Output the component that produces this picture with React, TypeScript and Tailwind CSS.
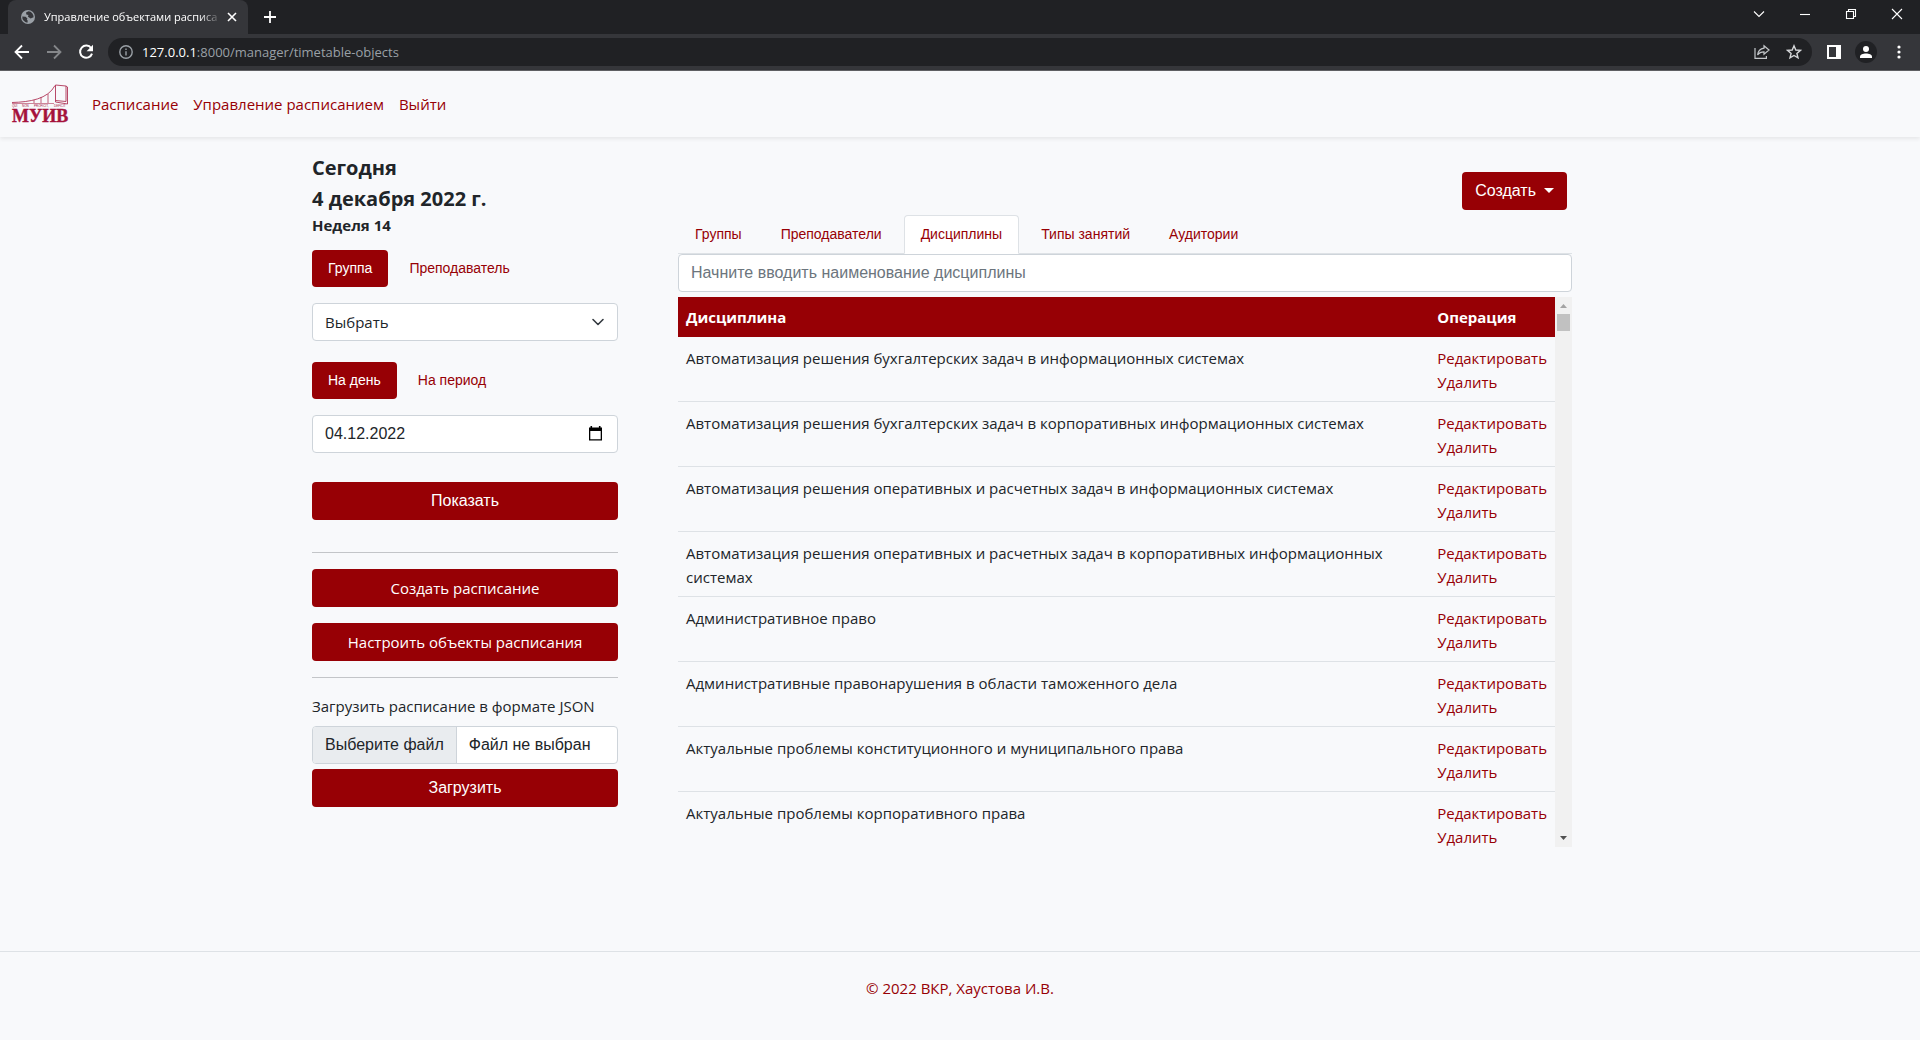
import React from "react";

const disciplines = [
  "Автоматизация решения бухгалтерских задач в информационных системах",
  "Автоматизация решения бухгалтерских задач в корпоративных информационных системах",
  "Автоматизация решения оперативных и расчетных задач в информационных системах",
  "Автоматизация решения оперативных и расчетных задач в корпоративных информационных системах",
  "Административное право",
  "Административные правонарушения в области таможенного дела",
  "Актуальные проблемы конституционного и муниципального права",
  "Актуальные проблемы корпоративного права",
];

const tabs = ["Группы", "Преподаватели", "Дисциплины", "Типы занятий", "Аудитории"];

const arial = "font-['Liberation_Sans',Arial,sans-serif]";
const solidButton =
  "flex h-[38px] w-full items-center justify-center rounded bg-[#970005] text-white";

function TabStrip() {
  return (
    <div className="flex h-[34px] items-stretch bg-[#202124] text-white">
      <div className="ml-2 flex w-60 items-center rounded-t-lg bg-[#35363a] pr-[11px] pl-3">
        <svg className="ml-px size-[14px] shrink-0" viewBox="0 0 14 14" aria-hidden="true">
          <circle cx="7" cy="7" r="7" fill="#9aa0a6" />
          <path d="M7.500 1.200 5 2.600 5.400 4.400 7.400 5 7 6.800 9.600 8.400 12.600 7.200A5.700 5.700 0 0 0 7.500 1.200ZM1.300 6.400 4.600 6.800 6.400 8.600 5.800 10 6.800 10.600 6.400 12.700A5.700 5.700 0 0 1 1.300 6.400Z" fill="#35363a" />
        </svg>
        <span className="ml-[9px] w-[178px] text-[11px] whitespace-nowrap [mask-image:linear-gradient(to_right,black_155px,transparent_178px)]">
          Управление объектами расписа
        </span>
        <button aria-label="Закрыть вкладку" className="ml-auto">
          <svg className="size-[10px]" viewBox="0 0 10 10" stroke="#fff" strokeWidth="1.6" aria-hidden="true">
            <path d="M1 1l8 8M9 1l-8 8" />
          </svg>
        </button>
      </div>
      <button aria-label="Новая вкладка" className="ml-4">
        <svg className="size-3" viewBox="0 0 12 12" stroke="#fff" strokeWidth="1.8" aria-hidden="true">
          <path d="M6 0v12M0 6h12" />
        </svg>
      </button>
      <div className="ml-auto flex h-7 items-center">
        {[
          ["Поиск вкладок", "M1 3.5l5 5 5-5"],
          ["Свернуть", "M1 6.5h10"],
          ["Развернуть", "M1.5 3.5h7v7h-7zM3.5 3.5v-2h7v7h-2"],
          ["Закрыть", "M1 1l10 10M11 1L1 11"],
        ].map(([label, d]) => (
          <button key={label} aria-label={label} className="flex w-[46px] justify-center">
            <svg className="size-3" viewBox="0 0 12 12" fill="none" stroke="#fff" strokeWidth="1.1" aria-hidden="true">
              <path d={d} />
            </svg>
          </button>
        ))}
      </div>
    </div>
  );
}

function Toolbar() {
  return (
    <div className="flex h-9 items-center bg-[#35363a] pr-[13px] pl-[14px]">
      <button aria-label="Назад">
        <svg className="size-4" viewBox="0 0 16 16" fill="none" stroke="#fff" strokeWidth="1.8" aria-hidden="true">
          <path d="M15 8H2M8 1.5 1.5 8 8 14.5" />
        </svg>
      </button>
      <button aria-label="Вперёд" className="ml-4">
        <svg className="size-4" viewBox="0 0 16 16" fill="none" stroke="#85878a" strokeWidth="1.8" aria-hidden="true">
          <path d="M1 8h13M8 1.5 14.5 8 8 14.5" />
        </svg>
      </button>
      <button aria-label="Обновить" className="ml-4">
        <svg className="size-4" viewBox="0 0 16 16" fill="none" aria-hidden="true">
          <path d="M13.2 4.2A6.1 6.1 0 1 0 14 9.6" stroke="#fff" strokeWidth="2" />
          <path d="M15 .8v6.4H8.6z" fill="#fff" />
        </svg>
      </button>
      <div className="ml-[14px] flex h-7 flex-1 items-center rounded-full bg-[#202124] pr-[10px] pl-[11px]">
        <svg className="size-[14px]" viewBox="0 0 14 14" fill="none" stroke="#9aa0a6" strokeWidth="1.4" aria-hidden="true">
          <circle cx="7" cy="7" r="6.2" />
          <path d="M7 6.2v4.2M7 3.4v1.5" />
        </svg>
        <span className="ml-[9px] text-[13px] leading-5 text-[#9aa0a6]">
          <span className="text-white">127.0.0.1</span>:8000/manager/timetable-objects
        </span>
        <button aria-label="Поделиться" className="ml-auto">
          <svg className="size-4" viewBox="0 0 16 16" fill="none" stroke="#c4c7ca" strokeWidth="1.2" aria-hidden="true">
            <path d="M1 4v10.4h11.4V12" />
            <path d="M10 1.8 15 6l-5 4.2V7.8C7 7.8 5 8.8 3.6 11 4 7.4 6 4.8 10 4.2z" />
          </svg>
        </button>
        <button aria-label="Добавить в закладки" className="ml-4">
          <svg className="size-4" viewBox="0 0 16 16" fill="none" stroke="#d5d7d9" strokeWidth="1.4" aria-hidden="true">
            <path d="M8 1.8 9.8 6l4.6.4-3.5 3 1.1 4.5L8 11.5l-4 2.4 1.1-4.5-3.5-3L6.2 6z" />
          </svg>
        </button>
      </div>
      <button aria-label="Боковая панель" className="ml-[15px]">
        <svg className="size-[14px]" viewBox="0 0 14 14" aria-hidden="true">
          <path d="M0 0h14v14H0zM2 2v10h7V2z" fill="#fff" fillRule="evenodd" />
        </svg>
      </button>
      <button aria-label="Профиль" className="ml-[14px] flex size-[22px] items-center justify-center rounded-full bg-[#202124]">
        <svg className="size-3" viewBox="0 0 12 12" fill="#fff" aria-hidden="true">
          <circle cx="6" cy="3" r="3" />
          <path d="M0 12V10.5C0 8.5 3 7.4 6 7.4s6 1.1 6 3.1V12z" />
        </svg>
      </button>
      <button aria-label="Меню" className="ml-[14px] flex w-4 justify-center">
        <svg className="h-[14px] w-1" viewBox="0 0 4 14" fill="#fff" aria-hidden="true">
          <circle cx="2" cy="2" r="1.6" />
          <circle cx="2" cy="7" r="1.6" />
          <circle cx="2" cy="12" r="1.6" />
        </svg>
      </button>
    </div>
  );
}

function Logo() {
  return (
    <svg className="h-10 w-[58px] overflow-visible" viewBox="0 0 58 40" role="img" aria-label="МУИВ">
      <g fill="none" stroke="#b03558" strokeWidth=".9">
        <path d="M0 18.500C18 18 36 15 43 1.500" />
        <path d="M0 19.500h42" strokeWidth=".6" />
        <path d="M22 19v-3M29 19v-6M36 19v-9" strokeWidth=".8" />
        <path d="M43.500 18V1L54 2V17.500L43.500 16.500M54 2 55.500 3V20L43.500 18" />
      </g>
      <g fontSize="3" fill="#a5123c" fontFamily="Liberation Sans, sans-serif">
        <text x="0" y="23">QUI</text>
        <text x="10" y="23">NON</text>
        <text x="22" y="23">PROFICIT,</text>
        <text x="42" y="23">DEFICIT</text>
      </g>
      <text x="0" y="38" fontSize="18" fontWeight="700" fill="#a5123c" stroke="#a5123c" strokeWidth=".4" fontFamily="Liberation Serif, serif">
        МУИВ
      </text>
    </svg>
  );
}

function Pills({ active, other }: { active: string; other: string }) {
  return (
    <div className={`${arial} flex gap-[5px] text-sm leading-[21px]`}>
      <button className="rounded bg-[#970005] px-4 py-2 text-white">{active}</button>
      <button className="px-4 py-2 text-[#970005]">{other}</button>
    </div>
  );
}

function Sidebar() {
  return (
    <aside className="w-[306px] shrink-0">
      <h1 className="mt-[15px] text-xl leading-[31px] font-bold">
        Сегодня
        <br />4 декабря 2022 г.
      </h1>
      <h2 className="mb-[14px] text-[15px] leading-[22px] font-bold">Неделя 14</h2>
      <Pills active="Группа" other="Преподаватель" />
      <div className="relative mt-4">
        <select aria-label="Группа" className="h-[38px] w-full appearance-none rounded border border-[#ced4da] bg-white px-3 pt-px text-[15px]">
          <option>Выбрать</option>
        </select>
        <svg className="pointer-events-none absolute top-[11px] right-3 size-4" viewBox="0 0 16 16" fill="none" stroke="#343a40" strokeWidth="1.600" strokeLinecap="round" strokeLinejoin="round" aria-hidden="true">
          <path d="m3 5.500 5 5 5-5" />
        </svg>
      </div>
      <div className="mt-[21px]">
        <Pills active="На день" other="На период" />
      </div>
      <div className="relative mt-4">
        <input aria-label="Дата" defaultValue="04.12.2022" className={`${arial} block h-[38px] w-full rounded border border-[#ced4da] bg-white px-3 text-base`} />
        <button aria-label="Открыть календарь" className="absolute top-[11px] right-4">
          <svg className="h-[15px] w-[13px]" viewBox="0 0 13 15" aria-hidden="true">
            <path d="M1.5 0h1.6v1.5h6.8V0h1.6v1.5H13V14.500H0V1.500h1.500zM1.300 5v8.200h10.400V5z" fill="#000" fillRule="evenodd" />
          </svg>
        </button>
      </div>
      <button className={`${arial} ${solidButton} mt-[29px]`}>Показать</button>
      <hr className="mt-8 mb-4 border-[#c3c5c8]" />
      <a href="#create" className={`${solidButton} text-[15px]`}>Создать расписание</a>
      <a href="#objects" className={`${solidButton} mt-4 text-[15px]`}>Настроить объекты расписания</a>
      <hr className="my-4 border-[#c3c5c8]" />
      <label htmlFor="json" className="block text-[15px] leading-6">
        Загрузить расписание в формате JSON
      </label>
      <label className={`${arial} relative mt-2 flex h-[38px] items-center overflow-hidden rounded border border-[#ced4da] bg-white text-base`}>
        <input id="json" type="file" className="sr-only" />
        <span className="flex h-full items-center border-r border-[#ced4da] bg-[#e9ecef] px-3">Выберите файл</span>
        <span className="px-3">Файл не выбран</span>
      </label>
      <button className={`${arial} ${solidButton} mt-[5px]`}>Загрузить</button>
    </aside>
  );
}

function Disciplines() {
  return (
    <section className="min-w-0 flex-1 pt-[35px]">
      <div className="flex justify-end pr-[5px]">
        <button className={`${arial} flex h-[38px] items-center gap-2 rounded bg-[#970005] px-[13px] text-base text-white`}>
          Создать
          <svg className="mb-[2px] h-[5px] w-[10px]" viewBox="0 0 10 5" fill="#fff" aria-hidden="true">
            <path d="M0 0h10L5 5z" />
          </svg>
        </button>
      </div>
      <div role="tablist" className={`${arial} mt-[5px] flex gap-[5px] border-b border-[#dee2e6] text-sm leading-[21px]`}>
        {tabs.map((tab) => (
          <button
            key={tab}
            role="tab"
            aria-selected={tab === "Дисциплины"}
            className="-mb-px rounded-t border border-transparent px-4 py-2 text-[#970005] aria-selected:border-[#dee2e6] aria-selected:border-b-white aria-selected:bg-white"
          >
            {tab}
          </button>
        ))}
      </div>
      <input
        aria-label="Наименование дисциплины"
        placeholder="Начните вводить наименование дисциплины"
        className={`${arial} block h-[38px] w-full rounded border border-[#ced4da] bg-white px-3 text-base placeholder:text-[#6c757d]`}
      />
      <div className="mt-[5px] flex h-[550px]">
        <div className="flex-1 overflow-y-auto [scrollbar-width:none]">
          <table className="w-full text-left text-[15px] leading-6">
            <thead className="bg-[#970005] text-white">
              <tr>
                <th className="p-2">Дисциплина</th>
                <th className="w-[124px] p-2">Операция</th>
              </tr>
            </thead>
            <tbody>
              {disciplines.map((name) => (
                <tr key={name} className="border-b border-[#dee2e6] align-top">
                  <td className="px-2 pt-[9px] pb-[7px]">{name}</td>
                  <td className="px-2 pt-[9px] pb-[7px] text-[#970005]">
                    <a href="#edit" className="block">Редактировать</a>
                    <a href="#delete" className="block">Удалить</a>
                  </td>
                </tr>
              ))}
            </tbody>
          </table>
        </div>
        <div className="flex w-[17px] shrink-0 flex-col items-center bg-[#f1f1f1]" aria-hidden="true">
          <svg className="mt-[7px] mb-[6px] h-1 w-[7px] shrink-0" viewBox="0 0 7 4" fill="#a3a3a3">
            <path d="M0 4h7L3.500 0z" />
          </svg>
          <div className="h-[17px] w-[13px] bg-[#c1c1c1]" />
          <svg className="mt-auto mb-[7px] h-1 w-[7px] shrink-0" viewBox="0 0 7 4" fill="#505050">
            <path d="M0 0h7L3.500 4z" />
          </svg>
        </div>
      </div>
    </section>
  );
}

export default function App() {
  return (
    <div className="flex min-h-screen flex-col bg-[#f8f9fb] font-['Open_Sans','Noto_Sans',sans-serif] text-[#212529]">
      <TabStrip />
      <Toolbar />
      <header className="flex h-[67px] items-center border-t border-[#5f6063] pl-3 shadow-[0_2px_4px_rgba(0,0,0,0.075)]">
        <a href="#home"><Logo /></a>
        <nav className="ml-[22px] flex gap-[15px] text-[15px] text-[#970005]">
          <a href="#timetable">Расписание</a>
          <a href="#manage">Управление расписанием</a>
          <a href="#logout">Выйти</a>
        </nav>
      </header>
      <main className="mx-auto flex w-full max-w-[1320px] flex-1 gap-[60px] pr-12 pl-3">
        <Sidebar />
        <Disciplines />
      </main>
      <footer className="h-[89px] border-t border-[#dee2e6] pt-6 text-center text-[15px] leading-6">
        <a href="#author" className="text-[#970005]">© 2022 ВКР, Хаустова И.В.</a>
      </footer>
    </div>
  );
}
